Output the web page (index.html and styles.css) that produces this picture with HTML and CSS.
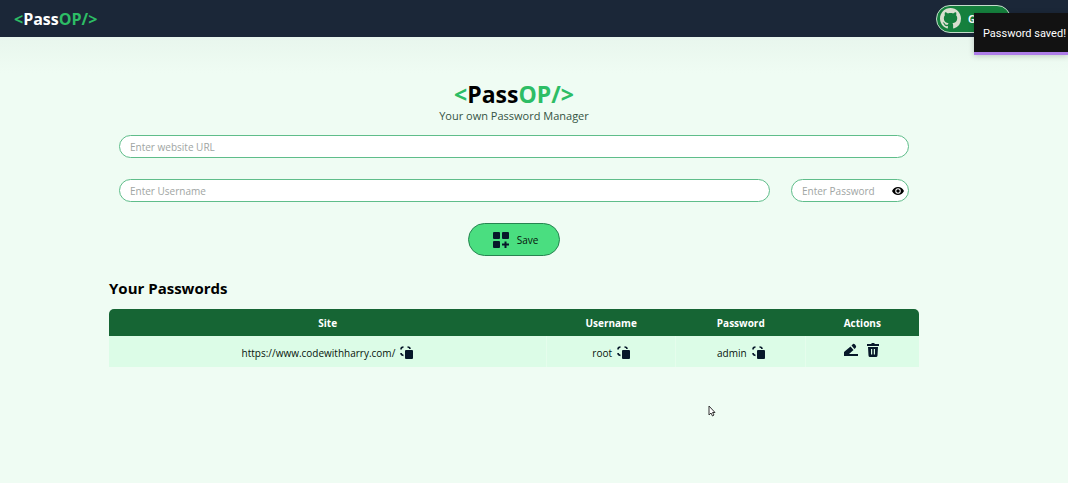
FILE: index.html
```html
<!DOCTYPE html>
<html lang="en">
<head>
<meta charset="utf-8">
<title>PassOP - Your own Password Manager</title>
<link rel="stylesheet" href="styles.css">
</head>
<body>
<svg class="sprite" aria-hidden="true">
  <symbol id="copy" viewBox="0 0 13 13">
    <rect x="5" y="4" width="8" height="9" rx="1"/>
    <path d="M1 3.500Q1 1 3.500 1M7.500 1Q10 1 10 3M1 7Q1 9 3.500 9.500" fill="none" stroke="currentColor" stroke-width="1.600"/>
  </symbol>
</svg>
<nav class="navbar">
  <div class="logo"><span class="accent">&lt;</span>Pass<span class="accent">OP/&gt;</span></div>
  <button class="github" type="button">
    <svg class="github-icon" viewBox="0 0 16 16" aria-hidden="true"><path d="M8 0C3.580 0 0 3.580 0 8c0 3.540 2.290 6.530 5.470 7.590.4.070.550-.170.550-.380 0-.190-.010-.820-.010-1.490-2.010.370-2.530-.490-2.690-.940-.090-.230-.480-.940-.820-1.130-.280-.150-.680-.520-.010-.530.630-.010 1.080.580 1.230.820.720 1.210 1.870.870 2.330.660.070-.520.280-.870.510-1.070-1.780-.200-3.640-.890-3.640-3.950 0-.870.310-1.590.820-2.150-.080-.200-.360-1.020.080-2.120 0 0 .670-.210 2.200.820.640-.180 1.320-.270 2-.270s1.360.090 2 .270c1.530-1.040 2.200-.820 2.200-.820.440 1.100.160 1.920.080 2.120.510.560.820 1.270.820 2.150 0 3.070-1.870 3.750-3.650 3.950.290.250.540.730.540 1.480 0 1.070-.010 1.930-.010 2.200 0 .210.150.460.550.380A8.010 8.010 0 0 0 16 8c0-4.420-3.580-8-8-8z"/></svg>
    <span>GitHub</span>
  </button>
</nav>
<div class="toast" role="status">Password saved!</div>
<main class="page">
  <header class="intro">
    <h1 class="title"><span class="accent">&lt;</span>Pass<span class="accent">OP/&gt;</span></h1>
    <p class="tagline">Your own Password Manager</p>
  </header>
  <form class="entry">
    <input class="field" type="text" placeholder="Enter website URL" aria-label="Website URL">
    <div class="credentials">
      <input class="field" type="text" placeholder="Enter Username" aria-label="Username">
      <div class="secret">
        <input class="field" type="password" placeholder="Enter Password" aria-label="Password">
        <button class="reveal" type="button" aria-label="Show password">
          <svg viewBox="0 0 24 16" aria-hidden="true"><path fill-rule="evenodd" d="M12 0Q20 0 24 8Q20 16 12 16Q4 16 0 8Q4 0 12 0ZM12 2.500A5.500 5.500 0 1 0 12 13.500A5.500 5.500 0 1 0 12 2.500Z"/><circle cx="12" cy="8" r="3.500"/></svg>
        </button>
      </div>
    </div>
    <button class="save" type="button">
      <svg viewBox="0 0 16 16" aria-hidden="true"><rect width="7" height="7" rx="1"/><rect x="9" width="7" height="7" rx="1"/><rect y="9" width="7" height="7" rx="1"/><path d="M11.500 9.500h2v2h2.500v2h-2.500v2.500h-2v-2.500H9v-2h2.500z"/></svg>
      <span>Save</span>
    </button>
  </form>
  <section>
    <h2 class="heading">Your Passwords</h2>
    <table class="vault">
      <thead><tr><th class="site">Site</th><th class="user">Username</th><th class="pass">Password</th><th class="actions">Actions</th></tr></thead>
      <tbody><tr>
        <td><div class="cell"><a class="link" href="https://www.codewithharry.com/">https://www.codewithharry.com/</a><button class="icon" type="button" aria-label="Copy site"><svg><use href="#copy"/></svg></button></div></td>
        <td><div class="cell"><span>root</span><button class="icon" type="button" aria-label="Copy username"><svg><use href="#copy"/></svg></button></div></td>
        <td><div class="cell"><span>admin</span><button class="icon" type="button" aria-label="Copy password"><svg><use href="#copy"/></svg></button></div></td>
        <td><div class="cell tools">
          <button class="icon" type="button" aria-label="Edit"><svg viewBox="0 0 14 14"><path d="M0 12V9L6.500 3.500L9.500 7L5 11H14V13H0ZM7.500 2.500L9 1Q10 .500 11 1.500L12 3Q12.500 4 11.500 5L10.500 6Z"/></svg></button>
          <button class="icon" type="button" aria-label="Delete"><svg viewBox="0 0 14 14"><path fill-rule="evenodd" d="M1 1H5.500V0H8.500V1H13V3H1ZM2 4H12L11.500 12.500Q11.400 14 10 14H4Q2.600 14 2.500 12.500ZM5 6V11.500H6.200V6ZM7.800 6V11.500H9V6Z"/></svg></button>
        </div></td>
      </tr></tbody>
    </table>
  </section>
</main>
<svg class="pointer" viewBox="0 0 8 12" aria-hidden="true"><path d="M1 1V10L3 8L4.500 11L6 10L4.500 7.500H7Z"/></svg>
</body>
</html>
```
FILE: styles.css
```css
* { box-sizing: border-box; }
body {
  margin: 0;
  min-height: 100vh;
  background: #effcf3;
  color: #07130c;
  font: 10px/16px "Open Sans", "Noto Sans", sans-serif;
}
button, input { font: inherit; color: inherit; }
button { padding: 0; border: 0; background: none; cursor: pointer; }
h1, h2, p { margin: 0; }
svg { display: block; fill: currentColor; }
.sprite { position: absolute; width: 0; height: 0; }
.accent { color: #2dbd65; }
.navbar {
  display: flex;
  align-items: center;
  justify-content: space-between;
  height: 37px;
  padding: 0 57px 0 14px;
  background: #1b2738;
  color: #fff;
}
.logo { font-size: 16px; line-height: 20px; font-weight: 700; }
.github {
  display: flex;
  align-items: center;
  gap: 7px;
  width: 75px;
  height: 28px;
  padding: 0 3px;
  overflow: hidden;
  border: 1px solid #c4dccb;
  border-radius: 14px;
  background: #15803d;
  font-weight: 700;
}
.github-icon { flex: none; width: 21px; height: 21px; color: #d9dfcf; }
.toast {
  position: absolute;
  top: 13px;
  right: 0;
  padding: 14px 2px 11px 9px;
  border-bottom: 3px solid #ae7de8;
  background: #121212;
  box-shadow: 0 1px 6px #0003;
  color: #fff;
  font: 11px/14px Roboto, "Liberation Sans", sans-serif;
}
.page {
  padding: 42px 149px 40px 109px;
  background: linear-gradient(#e8f6ed, #effcf3 36px);
}
.intro { text-align: center; }
.title { font-size: 23px; line-height: 30px; font-weight: 700; color: #000; }
.tagline { font-size: 11px; line-height: 14px; color: #345443; }
.entry { display: flex; flex-direction: column; gap: 21px; padding: 12px 10px 0; }
.field {
  width: 100%;
  min-width: 0;
  height: 23px;
  padding: 0 10px;
  border: 1px solid #5fbd8a;
  border-radius: 12px;
  background: #fff;
}
.field::placeholder { color: #a0a5a3; opacity: 1; }
.credentials { display: flex; gap: 21px; }
.secret { position: relative; flex: 0 0 118px; }
.reveal { position: absolute; top: 8px; right: 5px; color: #000; }
.reveal svg { width: 12px; height: 8px; }
.save {
  display: flex;
  align-items: center;
  align-self: center;
  gap: 8px;
  height: 33px;
  padding: 0 21px 0 24px;
  border: 1px solid #278450;
  border-radius: 17px;
  background: #4ade80;
}
.save svg { width: 16px; height: 16px; color: #07182a; }
.heading { padding: 21px 0 10px; font-size: 15px; line-height: 22px; font-weight: 700; color: #000; }
.vault { width: 100%; border-collapse: collapse; table-layout: fixed; overflow: hidden; border-radius: 5px 5px 0 0; }
.vault th { height: 27px; padding: 0; background: #166534; color: #fff; font-weight: 700; }
.vault td { height: 31px; padding: 0; background: #dcfce7; }
.vault td + td { border-left: 1px solid #e5fdec; }
.site { width: 54%; }
.user { width: 16%; }
.pass { width: 16%; }
.cell { display: flex; align-items: center; justify-content: center; gap: 5px; padding-top: 2px; }
.link { color: inherit; text-decoration: none; }
.icon { color: #07182a; }
.icon svg { width: 13px; height: 13px; }
.tools { gap: 8px; padding: 0 2px 3px 0; }
.tools .icon svg { width: 14px; height: 14px; }
.pointer { position: absolute; left: 708px; top: 405px; width: 8px; height: 12px; fill: #fff; stroke: #333; stroke-width: 1; }
```
